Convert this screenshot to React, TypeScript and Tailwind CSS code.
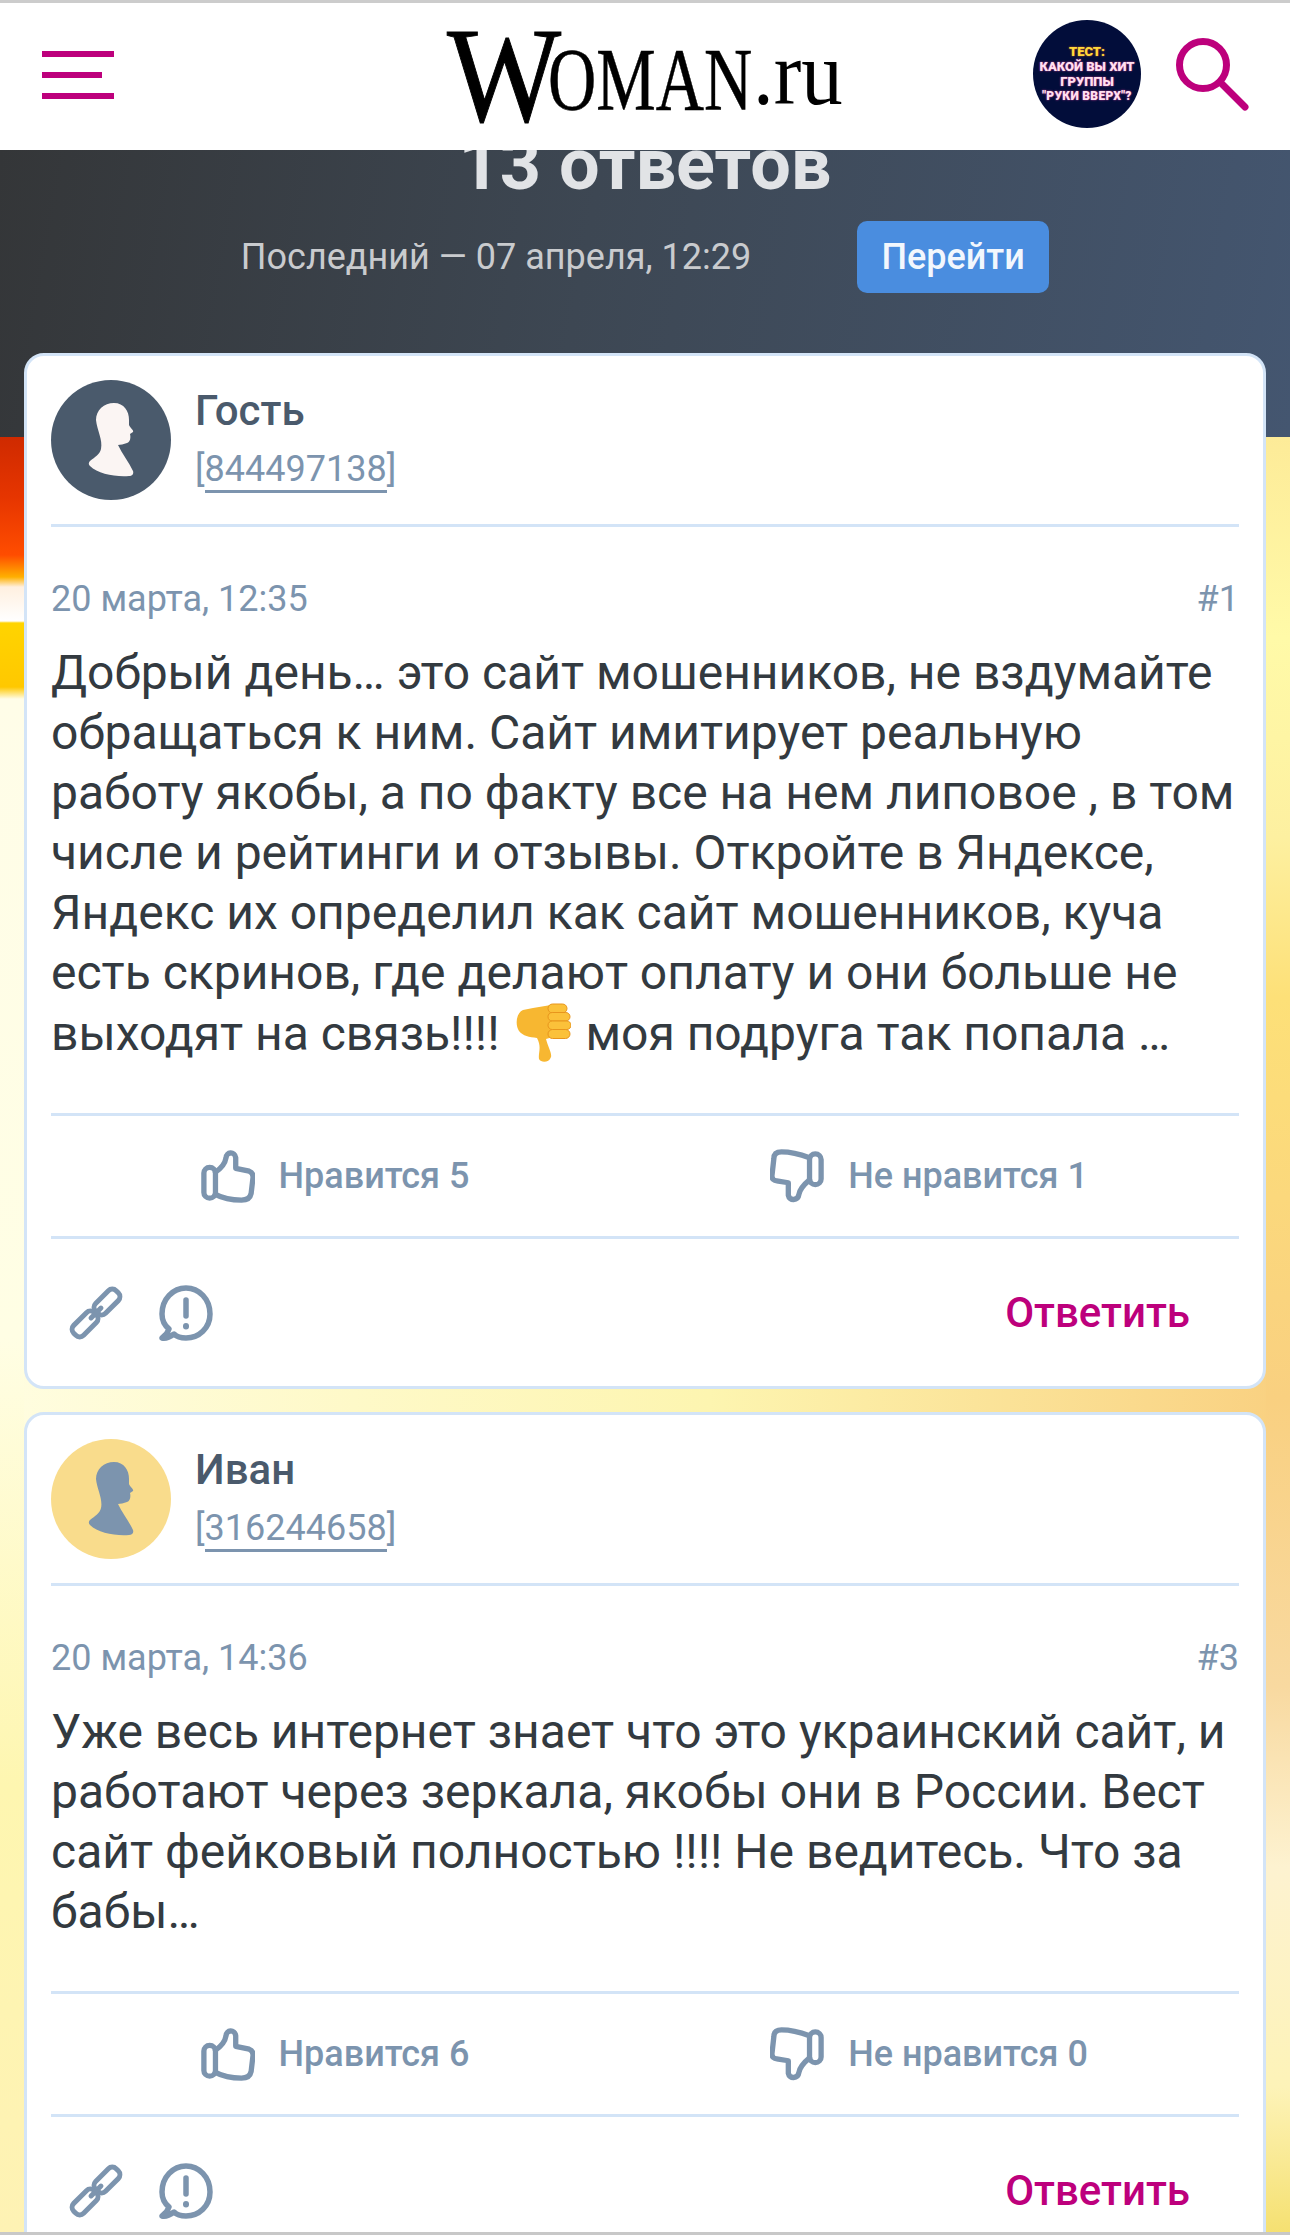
type Post = {
  name: string;
  id: string;
  date: string;
  num: string;
  likes: number;
  dislikes: number;
  avatarBg: string;
  figure: string;
  text: React.ReactNode;
};

function ThumbDownEmoji() {
  return (
    <svg viewBox="0 0 56 60" className="inline-block w-[56px] h-[60px] align-[-13px] mx-[3px]">
      <path
        d="M18 5 L36 2 L38 34 L31 36 C33 44 37 50 36 54 C34 60 26 60 24 56 C23 50 27 44 22 35 C14 34 8 33 4 28 C0 22 1 10 8 7 Z"
        fill="#f7b731"
      />
      <g fill="#fbc13a" stroke="#e8951c" strokeWidth="1">
        <rect x="33" y="1" width="19" height="9" rx="4.5" />
        <rect x="33" y="9.5" width="22" height="8.5" rx="4.2" />
        <rect x="33" y="18" width="23" height="8.5" rx="4.2" />
        <rect x="33" y="26.5" width="22" height="9" rx="4.5" />
      </g>
    </svg>
  );
}

const posts: Post[] = [
  {
    name: 'Гость',
    id: '844497138',
    date: '20 марта, 12:35',
    num: '#1',
    likes: 5,
    dislikes: 1,
    avatarBg: 'bg-[#4a5a6c]',
    figure: '#fbf5f3',
    text: (
      <>
        Добрый день… это сайт мошенников, не вздумайте обращаться к ним. Сайт имитирует реальную работу якобы, а по
        факту все на нем липовое , в том числе и рейтинги и отзывы. Откройте в Яндексе, Яндекс их определил как сайт
        мошенников, куча есть скринов, где делают оплату и они больше не выходят на связь!!!! <ThumbDownEmoji /> моя
        подруга так попала …
      </>
    ),
  },
  {
    name: 'Иван',
    id: '316244658',
    date: '20 марта, 14:36',
    num: '#3',
    likes: 6,
    dislikes: 0,
    avatarBg: 'bg-[#f9dc8c]',
    figure: '#7c94ae',
    text: (
      <>
        Уже весь интернет знает что это украинский сайт, и работают через зеркала, якобы они в России. Вест сайт
        фейковый полностью !!!! Не ведитесь. Что за бабы…
      </>
    ),
  },
];

function Avatar({ bg, fill }: { bg: string; fill: string }) {
  return (
    <div className={`w-[120px] h-[120px] rounded-full shrink-0 ${bg}`}>
      <svg viewBox="0 0 120 120" className="w-full h-full">
        <path
          d="M63 23 C73 23 78 31 78 40 L78 45 C79 48 83 50 82 52 L79 54 C80 58 79 62 76 63 C73 64 69 65 67 65 C71 74 78 82 82 91 C83 94 81 96 78 96 C64 97 47 94 39 86 C37 84 38 82 39 81 C44 77 49 74 50 69 C52 60 46 50 45 40 C45 30 53 23 63 23 Z"
          fill={fill}
        />
      </svg>
    </div>
  );
}

function ThumbUp() {
  return (
    <svg viewBox="0 0 56 56" className="w-[54px] h-[54px] shrink-0" fill="none" stroke="#7c94ae" strokeWidth="5.5" strokeLinejoin="round" strokeLinecap="round">
      <rect x="3" y="19" width="12" height="32" rx="6" />
      <path d="M15 24 C21 20 25 15 26 9 C26 3 35 2 36 9 L36 20 L50 23 C53 24 54 26 54 29 L52 46 C51 51 47 53 42 53 C33 53 24 52 15 47" />
    </svg>
  );
}

function ThumbDown() {
  return (
    <svg viewBox="0 0 56 56" className="w-[54px] h-[54px] shrink-0" fill="none" stroke="#7c94ae" strokeWidth="5.5" strokeLinejoin="round" strokeLinecap="round">
      <rect x="41" y="5" width="12" height="32" rx="6" />
      <path d="M41 9 C30 5 20 3 12 3 C6 3 4 6 4 10 L2 28 C2 31 4 33 7 33 L19 35 L19 48 C20 54 29 54 30 47 C31 41 35 37 41 32" />
    </svg>
  );
}

function LinkIcon() {
  return (
    <svg viewBox="0 0 54 54" className="w-[54px] h-[54px] shrink-0 overflow-visible" fill="none" stroke="#7c94ae" strokeWidth="5" strokeLinecap="round" strokeLinejoin="round">
      <g transform="rotate(45 27 27)">
        <rect x="20" y="-3" width="14" height="29" rx="5.5" />
        <rect x="20" y="28" width="14" height="29" rx="5.5" />
        <path d="M27 20 L27 34" />
      </g>
    </svg>
  );
}

function ReportIcon() {
  return (
    <svg viewBox="0 0 54 56" className="w-[54px] h-[56px] shrink-0" fill="none" stroke="#7c94ae" strokeWidth="5.5" strokeLinecap="round" strokeLinejoin="round">
      <path d="M27 3 C40 3 51 14 51 29 C51 43 40 53 27 53 C22 53 18 52 15 49 C11 52 7 54 3 53 C7 50 9 47 10 44 C5 40 3 35 3 29 C3 14 14 3 27 3 Z" />
      <path d="M27 15 L27 31" />
      <path d="M27 41 L27 41.5" strokeWidth="6" />
    </svg>
  );
}

function Card({ post }: { post: Post }) {
  return (
    <div className="bg-white border-[3px] border-[#d3e4f7] rounded-[20px] px-[24px] font-['Roboto',sans-serif]">
      <div className="flex gap-[24px] pt-[24px] pb-[24px] border-b-[3px] border-[#d3e4f7]">
        <Avatar bg={post.avatarBg} fill={post.figure} />
        <div className="pt-[7px]">
          <div className="text-[42px] leading-[48px] font-medium text-[#4a5a6c]">{post.name}</div>
          <div className="text-[36px] leading-[44px] mt-[12px] text-[#7c94ae]">
            [<span className="border-b-[3px] border-[#7c94ae]">{post.id}</span>]
          </div>
        </div>
      </div>

      <div className="flex justify-between pt-[51px] text-[36px] leading-[42px] text-[#7c94ae]">
        <span>{post.date}</span>
        <span>{post.num}</span>
      </div>

      <p className="mt-[23px] mb-[49px] text-[48px] leading-[60px] text-[#333a40]">{post.text}</p>

      <div className="grid grid-cols-2 h-[126px] border-y-[3px] border-[#d3e4f7] text-[36px] font-medium text-[#7c94ae]">
        <div className="flex items-center justify-center gap-[24px] pr-[26px]">
          <ThumbUp />
          <span>Нравится {post.likes}</span>
        </div>
        <div className="flex items-center justify-center gap-[24px] pr-[26px]">
          <ThumbDown />
          <span>Не нравится {post.dislikes}</span>
        </div>
      </div>

      <div className="flex items-center h-[147px] pl-[18px] pr-[49px]">
        <LinkIcon />
        <div className="ml-[36px]">
          <ReportIcon />
        </div>
        <span className="ml-auto text-[42px] font-medium text-[#bd007c]">Ответить</span>
      </div>
    </div>
  );
}

export default function App() {
  return (
    <div className="w-[1290px] h-[2235px] overflow-hidden flex flex-col border-b-[3px] border-[#c8c8c8] font-['Roboto',sans-serif]">
      {/* шапка */}
      <header className="h-[150px] shrink-0 relative z-10 bg-white border-t-[3px] border-[#cccccc] flex items-center pl-[42px] pr-[41px]">
        <div className="flex flex-col gap-[15px] -mt-[3px]">
          <div className="w-[72px] h-[6px] bg-[#bd007c]" />
          <div className="w-[60px] h-[6px] bg-[#bd007c]" />
          <div className="w-[72px] h-[6px] bg-[#bd007c]" />
        </div>

        <div className="flex items-baseline ml-[333px] -mt-[3px] text-black font-['Liberation_Serif',serif] leading-none">
          <span className="text-[136px] w-[101px] inline-block origin-left scale-x-[0.89] [-webkit-text-stroke:1px_black]">W</span>
          <span className="text-[88px] w-[205px] inline-block origin-left scale-x-[0.76] -translate-y-[12px] whitespace-nowrap [-webkit-text-stroke:0.5px_black]">OMAN</span>
          <span className="text-[92px] w-[90px] inline-block origin-left scale-x-[0.9] -translate-y-[17px] whitespace-nowrap">.ru</span>
        </div>

        <div className="flex items-center gap-[35px] ml-auto -mt-[5px]">
          <div className="w-[108px] h-[108px] rounded-full bg-[#020d3a] flex flex-col items-center justify-center text-center font-black text-[13px] leading-[15px] text-[#ffe0f0] [text-shadow:0_0_2px_#e0409a]">
            <span className="text-[#ffd83a] [text-shadow:0_0_2px_#d06020]">ТЕСТ:</span>
            <span className="whitespace-nowrap">КАКОЙ ВЫ ХИТ</span>
            <span>ГРУППЫ</span>
            <span className="whitespace-nowrap text-[12px] tracking-[0.3px]">"РУКИ ВВЕРХ"?</span>
          </div>
          <svg viewBox="0 0 73 73" className="w-[73px] h-[73px]" fill="none" stroke="#bd007c" strokeWidth="7" strokeLinecap="round">
            <circle cx="27" cy="27" r="23.5" />
            <path d="M44 44 L69 69" />
          </svg>
        </div>
      </header>

      {/* полоса с количеством ответов */}
      <section className="h-[287px] shrink-0 overflow-hidden flex flex-col items-center bg-[linear-gradient(100deg,#343638_0%,#3d4753_45%,#445670_100%)]">
        <h2 className="text-[72px] leading-[72px] -mt-[21px] font-bold text-[#e1e3e6]">13 ответов</h2>
        <div className="flex items-center mt-[20px] gap-[106px]">
          <span className="text-[36px] text-[#c9cbce]">Последний — 07 апреля, 12:29</span>
          <button className="w-[192px] h-[72px] rounded-[10px] bg-[#4a8ddf] text-[36px] font-medium text-[#f2f7fd]">
            Перейти
          </button>
        </div>
      </section>

      {/* комментарии */}
      <main
        className="flex-1 px-[24px] bg-no-repeat bg-[length:24px_100%,24px_100%,100%_100%] bg-[position:left_top,right_top,left_top] bg-[image:linear-gradient(180deg,#cf2a00_0px,#e63500_60px,#ff4d00_118px,#ffb000_140px,#fff0e0_150px,#ffffff_184px,#ffd400_186px,#ffc800_250px,#fffde8_262px,#fffee4_900px,#fef6b0_1350px,#fef2b4_1798px),linear-gradient(180deg,#fdeb98_0px,#fffaa8_200px,#fdf0a0_400px,#fde078_560px,#f9d080_960px,#f8d9a0_1250px,#fdf2d0_1430px,#fdf3b8_1650px,#f5e070_1798px),linear-gradient(90deg,#fffde0_0%,#fdf5b0_55%,#f9d080_100%)]"
      >
        <div className="-mt-[84px] flex flex-col gap-[23px]">
          {posts.map((post) => (
            <Card key={post.id} post={post} />
          ))}
        </div>
      </main>
    </div>
  );
}
